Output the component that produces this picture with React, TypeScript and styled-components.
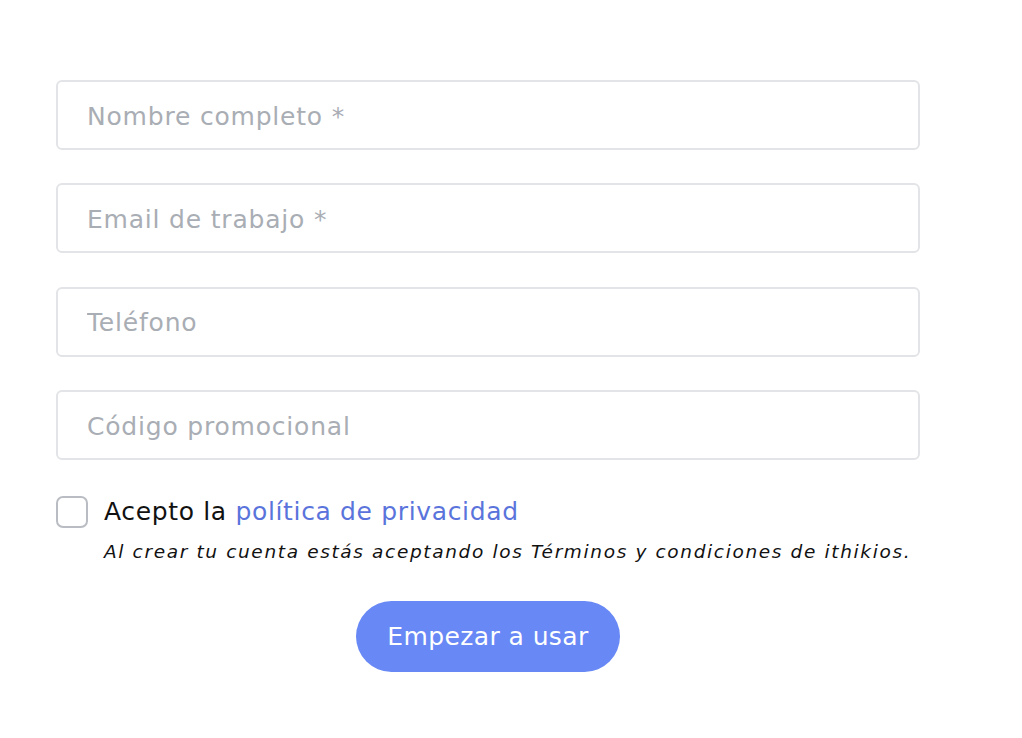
import styled, { createGlobalStyle } from 'styled-components';

const GlobalStyle = createGlobalStyle`
  html, body {
    margin: 0;
    padding: 0;
    background: #ffffff;
    font-family: 'DejaVu Sans', 'Liberation Sans', sans-serif;
  }
  * { box-sizing: border-box; }
`;

const fields = [
  'Nombre completo *',
  'Email de trabajo *',
  'Teléfono',
  'Código promocional',
];

function App() {
  return (
    <>
      <GlobalStyle />
      <Page>
        <Form onSubmit={(e) => e.preventDefault()}>
          <Fields>
            {fields.map((f) => (
              <Input key={f} placeholder={f} />
            ))}
          </Fields>
          <Consent>
            <CheckRow>
              <CheckBox type="checkbox" />
              <CheckLabel>
                Acepto la <PrivacyLink href="#">política de privacidad</PrivacyLink>
              </CheckLabel>
            </CheckRow>
            <Note>
              Al crear tu cuenta estás aceptando los Términos y condiciones de ithikios.
            </Note>
          </Consent>
          <SubmitRow>
            <SubmitButton type="submit">Empezar a usar</SubmitButton>
          </SubmitRow>
        </Form>
      </Page>
    </>
  );
}

export default App;

const Page = styled.div`
  width: 1022px;
  height: 738px;
  padding: 80px 0 0 56px;
`;

const Form = styled.form`
  width: 864px;
  display: flex;
  flex-direction: column;
`;

const Fields = styled.div`
  display: flex;
  flex-direction: column;
  gap: 33.4px;
`;

const Input = styled.input`
  width: 100%;
  height: 70px;
  border: 2px solid #e3e4e7;
  border-radius: 6px;
  padding: 2px 29px 0;
  font-family: inherit;
  font-size: 25px;
  letter-spacing: 0.8px;
  color: #222;
  outline: none;
  background: #fff;

  &::placeholder {
    color: #a9adb4;
  }
`;

const Consent = styled.div`
  margin-top: 36px;
  display: flex;
  flex-direction: column;
`;

const CheckRow = styled.label`
  display: flex;
  align-items: center;
  gap: 16px;
  cursor: pointer;
`;

const CheckBox = styled.input`
  appearance: none;
  margin: 0;
  flex-shrink: 0;
  width: 32px;
  height: 32px;
  border: 2px solid #b9bdc3;
  border-radius: 7px;
  background: #fff;
  cursor: pointer;
`;

const CheckLabel = styled.span`
  font-size: 25px;
  letter-spacing: 0.65px;
  line-height: 32px;
  color: #111;
`;

const PrivacyLink = styled.a`
  color: #5a74dc;
  text-decoration: none;
`;

const Note = styled.p`
  margin: 12px 0 0 48px;
  font-size: 18.5px;
  line-height: 24px;
  letter-spacing: 1.64px;
  font-style: italic;
  color: #111;
`;

const SubmitRow = styled.div`
  margin-top: 37px;
  display: flex;
  justify-content: center;
`;

const SubmitButton = styled.button`
  width: 264px;
  height: 71px;
  border: none;
  border-radius: 36px;
  background: #6788f5;
  color: #fff;
  font-family: inherit;
  font-size: 25px;
  letter-spacing: 0.4px;
  cursor: pointer;
`;
